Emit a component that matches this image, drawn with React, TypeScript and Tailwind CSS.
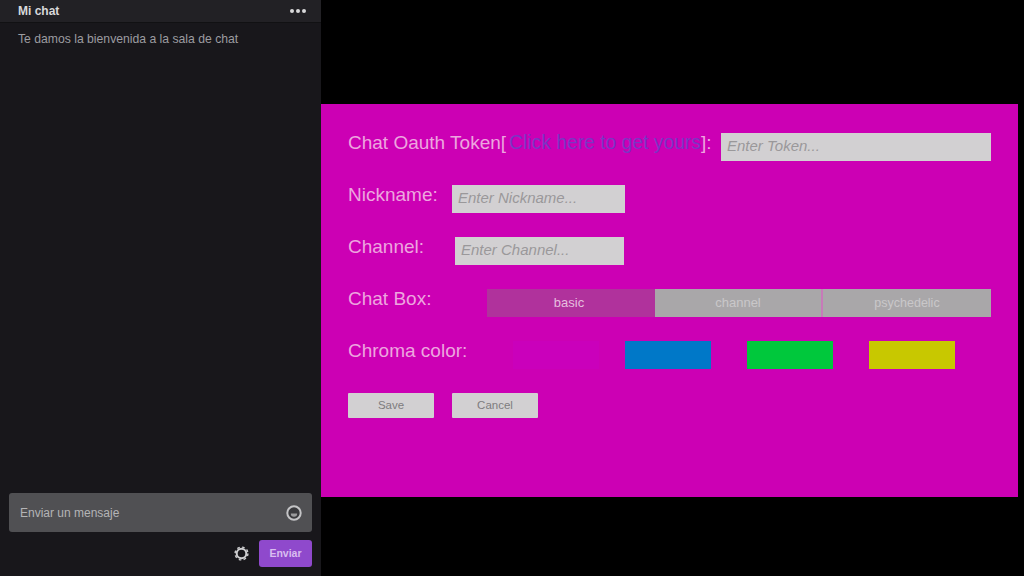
const labelClass = "text-[19px] leading-[20px] text-[#eda6df]";
const inputClass =
  "h-[28px] bg-[#d2d0d2] px-[6px] pb-[4px] text-[15px] italic text-[#9a989a] outline-none placeholder:text-[#9a989a]";

function Row({ className, children }: { className: string; children: React.ReactNode }) {
  return <div className={`flex h-[28px] items-start ${className}`}>{children}</div>;
}

export default function App() {
  return (
    <div
      className="flex h-[576px] w-[1024px] overflow-hidden bg-black"
      style={{ fontFamily: '"Liberation Sans", Arial, sans-serif' }}
    >
      {/* twitch chat column */}
      <aside className="flex w-[321px] shrink-0 flex-col bg-[#18171b]">
        <header className="flex h-[23px] items-center justify-between border-b border-[#111113] bg-[#222125] pl-[18px] pr-[15px]">
          <span className="text-[12px] font-bold text-[#d8d8da]">Mi chat</span>
          <span className="flex gap-[2px]">
            <i className="h-[4px] w-[4px] rounded-full bg-[#d8d8da]" />
            <i className="h-[4px] w-[4px] rounded-full bg-[#d8d8da]" />
            <i className="h-[4px] w-[4px] rounded-full bg-[#d8d8da]" />
          </span>
        </header>
        <p className="mt-[9px] flex-1 pl-[18px] text-[12.2px] leading-[14px] text-[#9c9ca0]">
          Te damos la bienvenida a la sala de chat
        </p>
        <div className="px-[9px] pb-[9px]">
          <div className="flex h-[39px] items-center justify-between rounded-[3px] bg-[#505053] pl-[11px] pr-[10px]">
            <span className="text-[12px] text-[#b4b4b6]">Enviar un mensaje</span>
            <svg width="16" height="16" viewBox="0 0 16 16" fill="none">
              <circle cx="8" cy="8" r="6.7" fill="#3a3a3d" stroke="#c4c4c6" strokeWidth="2" />
              <path d="M4.8 8.5a3.2 3.2 0 0 0 6.4 0z" fill="#9a9a9c" />
            </svg>
          </div>
          <div className="mt-[8px] flex items-center justify-end gap-[9px]">
            <svg width="17" height="17" viewBox="0 0 17 17" fill="none">
              <circle cx="8.5" cy="8.5" r="4.8" stroke="#cfcfd1" strokeWidth="2" />
              <circle cx="8.5" cy="8.5" r="6.4" stroke="#cfcfd1" strokeWidth="1.4" strokeDasharray="2.6 2.4" />
            </svg>
            <button className="h-[27px] w-[53px] rounded-[3px] bg-[#8f49cc] text-[10.5px] font-bold text-[#d9bdf0]">
              Enviar
            </button>
          </div>
        </div>
      </aside>

      {/* config panel */}
      <main className="flex-1 pr-[6px] pt-[104px]">
        <form className="h-[393px] bg-[#cc00b4] pl-[27px] pr-[27px] pt-[29px]">
          <Row className="">
            <span className={labelClass}>Chat Oauth Token[</span>
            <a className="ml-[3px] text-[19.3px] leading-[20px] text-[#7b36c4]">Click here to get yours</a>
            <span className={labelClass}>]:</span>
            <input className={`${inputClass} ml-auto w-[270px]`} placeholder="Enter Token..." />
          </Row>
          <Row className="mt-[24px]">
            <span className={`${labelClass} w-[104px]`}>Nickname:</span>
            <input className={`${inputClass} w-[173px]`} placeholder="Enter Nickname..." />
          </Row>
          <Row className="mt-[24px]">
            <span className={`${labelClass} w-[107px]`}>Channel:</span>
            <input className={`${inputClass} w-[169px]`} placeholder="Enter Channel..." />
          </Row>
          <Row className="mt-[24px]">
            <span className={`${labelClass} w-[139px]`}>Chat Box:</span>
            <div className="flex text-[13px]">
              <div className="flex h-[28px] w-[168px] items-center justify-center bg-[#b0329c] pr-[4px] text-[#e6bfdf]">
                basic
              </div>
              <div className="flex h-[28px] w-[168px] items-center justify-center border-r-2 border-[#c77ab9] bg-[#a9a7a9] text-[#c9c7c9]">
                channel
              </div>
              <div className="flex h-[28px] w-[168px] items-center justify-center bg-[#a9a7a9] text-[12.5px] text-[#c9c7c9]">
                psychedelic
              </div>
            </div>
          </Row>
          <Row className="mt-[24px]">
            <span className={`${labelClass} w-[165px]`}>Chroma color:</span>
            <div className="h-[28px] w-[86px] bg-[#ca00bb]" />
            <div className="ml-[26px] h-[28px] w-[86px] bg-[#0078c8]" />
            <div className="ml-[36px] h-[28px] w-[86px] bg-[#00c83c]" />
            <div className="ml-[36px] h-[28px] w-[86px] bg-[#c8c800]" />
          </Row>
          <div className="mt-[24px] flex gap-[18px]">
            <button className="h-[25px] w-[86px] rounded-[1px] bg-[#d2d0d2] text-[11.5px] text-[#7e7c7e]">Save</button>
            <button className="h-[25px] w-[86px] rounded-[1px] bg-[#d2d0d2] text-[11.5px] text-[#7e7c7e]">Cancel</button>
          </div>
        </form>
      </main>
    </div>
  );
}
